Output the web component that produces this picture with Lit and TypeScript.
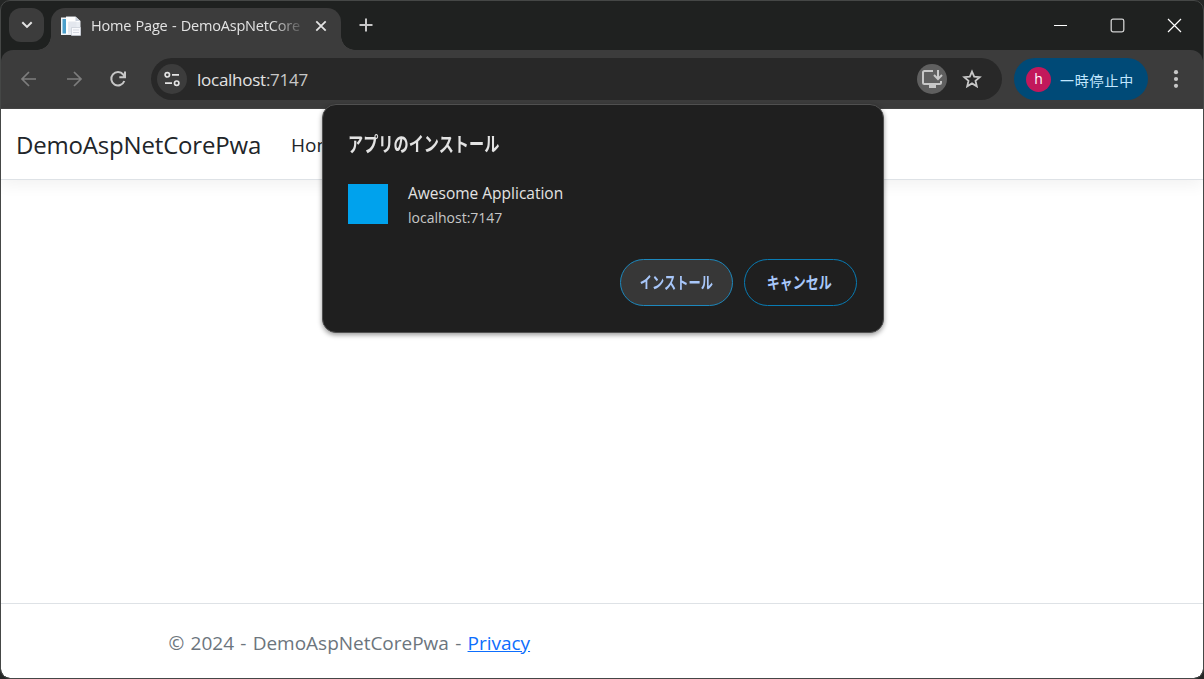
import { LitElement, html, css } from "lit";
import { customElement } from "lit/decorators.js";

@customElement("app-root")
export class AppRoot extends LitElement {
  static styles = css`
    :host { display: block; width: 1204px; height: 679px; background: #242625; overflow: hidden;
      font-family: "Open Sans", "Noto Sans CJK JP", sans-serif; }
    * { box-sizing: border-box; }
    svg { display: block; flex: none; }
    .window { position: relative; width: 1204px; height: 679px; border: 1px solid #454746; border-radius: 10px;
      overflow: hidden; display: flex; flex-direction: column; background: #1f2120; }
    .tabs { height: 49px; flex: none; display: flex; padding: 7px 0 0 8px; }
    .search { width: 35px; height: 34px; border-radius: 12px; background: #3c3c3c; display: grid; place-items: center; }
    .tab { position: relative; width: 290px; height: 42px; margin-left: 7px; background: #3c3c3c;
      border-radius: 14px 14px 0 0; display: flex; align-items: center; padding: 0 13px 6px 10px; }
    .tab::before, .tab::after { content: ""; position: absolute; bottom: 0; width: 14px; height: 14px; }
    .tab::before { left: -14px; background: radial-gradient(circle at 0 0, transparent 13.5px, #3c3c3c 14px); }
    .tab::after { right: -14px; background: radial-gradient(circle at 100% 0, transparent 13.5px, #3c3c3c 14px); }
    .tab-title { width: 210px; margin-left: 10px; white-space: nowrap; overflow: hidden; color: #e3e3e3;
      font-size: 14.5px; line-height: 22px; letter-spacing: -0.2px; word-spacing: 0.8px;
      -webkit-mask-image: linear-gradient(90deg, #000 180px, transparent 216px); }
    .tab-close { margin-left: 14px; }
    .plus { margin: 10px 0 0 18px; }
    .controls { margin-left: auto; display: flex; padding: 10px 21px 0 0; gap: 42px; }
    .toolbar { height: 59px; flex: none; background: #3c3c3c; border-radius: 12px 12px 0 0; display: flex;
      align-items: center; padding-left: 18px; border-bottom: 1px solid #454545; }
    .nav { display: flex; gap: 24.5px; }
    .omni { width: 851px; height: 42px; margin-left: 23px; border-radius: 21px; background: #282828;
      display: flex; align-items: center; padding: 0 20px 0 6px; }
    .round { width: 30px; height: 30px; border-radius: 50%; display: grid; place-items: center; background: #3c3c3c; }
    .round.pwa { background: #5f5f5f; margin-left: auto; }
    .url { margin-left: 10px; color: #e3e3e3; font-size: 17px; line-height: 24px; letter-spacing: -0.26px; padding-top: 1px; }
    .url span { color: #c7c7c7; }
    .star { margin-left: 15px; }
    .chip { width: 134px; height: 42px; border-radius: 21px; margin-left: 12px; background: #004a77; color: #c2e7ff;
      display: flex; align-items: center; padding-left: 12px; font: 14px/20px "Noto Sans CJK JP", sans-serif; }
    .chip-text { margin: 1px 0 0 9px; letter-spacing: 0.8px; white-space: nowrap; }
    .avatar { width: 25px; height: 25px; border-radius: 50%; background: #c2185b; color: #fff; text-align: center;
      font: 14px/24px "Open Sans", sans-serif; }
    .more { margin-left: 23px; }
    .page { flex: 1; background: #fff; display: flex; flex-direction: column; border-radius: 0 0 9px 9px; }
    .header { height: 71px; border-bottom: 1px solid #dee2e6; box-shadow: 0 5px 15px rgba(0,0,0,.055);
      display: flex; align-items: center; padding: 0 15px 0 15px; color: #212529; }
    .brand { font-size: 24px; line-height: 36px; width: 275px; letter-spacing: -0.18px; margin-top: 2px; white-space: nowrap; }
    .link { font-size: 19px; letter-spacing: 0; margin-top: 1px; }
    .footer { margin-top: auto; height: 75px; border-top: 1px solid #dee2e6; padding: 25px 0 0 167.5px; color: #6c757d;
      font-size: 19px; line-height: 28px; letter-spacing: -0.02px; word-spacing: 1.4px; white-space: nowrap; }
    .footer a { color: #0d6efd; text-decoration: underline; }
    .dialog { position: absolute; left: 321px; top: 103px; width: 562px; height: 229px; border-radius: 14px;
      background: #1f1f1f; border: 1.5px solid #505050; box-shadow: 0 2px 5px rgba(0,0,0,.4);
      padding: 25px 26px 26px 25px; display: flex; flex-direction: column; }
    .title { color: #e3e3e3; font: 700 20px/28px "Noto Sans CJK JP", sans-serif; height: 28px; }
    .narrow { display: inline-block; transform-origin: 0 50%; white-space: nowrap; }
    .title .narrow { transform: scaleX(.758); }
    .app { display: flex; margin-top: 26px; gap: 20px; }
    .app-icon { width: 40px; height: 40px; background: #00a2ed; }
    .name { color: #e3e3e3; font-size: 15.5px; line-height: 24px; margin-top: -3px; letter-spacing: 0; white-space: nowrap; }
    .host { color: #c7c7c7; font-size: 14px; line-height: 20px; margin-top: 3px; letter-spacing: 0; }
    .actions { margin-top: auto; display: flex; justify-content: flex-end; gap: 11px; }
    .btn { width: 113px; height: 47px; border-radius: 24px; border: 1.3px solid #087bb3; background: transparent; padding: 0 0 1px;
      color: #a8c7fa; font: 700 16.5px/24px "Noto Sans CJK JP", sans-serif; display: grid; place-items: center; }
    .btn.primary { background: #373737; border-color: #1d88bd; }
    .btn .narrow { transform-origin: 50% 50%; transform: translateX(-1px) scaleX(.79); }
    .btn.primary .narrow { transform: scaleX(.74); }
  `;

  render() {
    return html`
      <div class="window">
        <div class="tabs">
          <div class="search">
            <svg width="12" height="8" viewBox="0 0 12 8" fill="none" stroke="#e3e3e3" stroke-width="2"><path d="M1.3 1.2 6 5.9l4.7-4.7"/></svg>
          </div>
          <div class="tab">
            <svg width="20" height="20" viewBox="0 0 20 20">
              <path d="M0 1.5h5V19H0z" fill="#f3f6f9"/><path d="M1.5 3H5v14.500H1.500z" fill="#4b9fcb"/>
              <path d="M5 .5h9.500l5 4.500V19H5z" fill="#e9edf3"/>
              <path d="M5 1h9.500l4 4v1H7v12H5z" fill="#fff"/><path d="M14.500.800V5h4z" fill="#c7cfdb"/>
              <path d="M7.500 5.500h8v6h-8z" fill="#e3e7ee"/><path d="M7 13h3M7 15h3" stroke="#dde2ea"/>
              <path d="M10.500 11.500h9V19.500h-9z" fill="#f8f9fc" stroke="#c6cbd6" stroke-width=".7"/><path d="M12 14h6M12 16.500h6" stroke="#d5d9e2"/>
            </svg>
            <span class="tab-title">Home Page - DemoAspNetCorePwa</span>
            <svg class="tab-close" width="12" height="12" viewBox="0 0 12 12" stroke="#e3e3e3" stroke-width="1.8"><path d="m1.300 1.300 9.400 9.400M10.700 1.300l-9.400 9.400"/></svg>
          </div>
          <svg class="plus" width="14" height="14" viewBox="0 0 14 14" stroke="#c7c7c7" stroke-width="2"><path d="M7 .5v13M.5 7h13"/></svg>
          <div class="controls">
            <svg width="15" height="15" viewBox="0 0 15 15" stroke="#fff"><path d="M1 7.500h13"/></svg>
            <svg width="15" height="15" viewBox="0 0 15 15" fill="none" stroke="#d0d0d0" stroke-width="1.3"><rect x="1.2" y="1.2" width="12.6" height="12.6" rx="1.8"/></svg>
            <svg width="15" height="15" viewBox="0 0 15 15" stroke="#fff" stroke-width="1.2"><path d="m1 1 13 13M14 1 1 14"/></svg>
          </div>
        </div>
        <div class="toolbar">
          <div class="nav">
            <svg width="20" height="20" viewBox="0 0 20 20" fill="none" stroke="#7d7d7d" stroke-width="1.7"><path d="M17 10H3.400M10 3 3 10l7 7"/></svg>
            <svg width="20" height="20" viewBox="0 0 20 20" fill="none" stroke="#7d7d7d" stroke-width="1.7"><path d="M3 10h13.600M10 3l7 7-7 7"/></svg>
            <svg width="20" height="20" viewBox="0 0 20 20" fill="none" stroke="#c7c7c7" stroke-width="2"><path d="M16.300 12a6.700 6.700 0 1 1-1.100-6.500l1.300 1.800M17 2.500v5.700h-5.700"/></svg>
          </div>
          <div class="omni">
            <div class="round">
              <svg width="18" height="18" viewBox="0 0 18 18" fill="none" stroke="#e3e3e3" stroke-width="1.7"><circle cx="4.3" cy="4.8" r="2.2"/><path d="M9 4.800h7M2 13.200h7"/><circle cx="13.7" cy="13.2" r="2.2"/></svg>
            </div>
            <div class="url">localhost<span>:7147</span></div>
            <div class="round pwa">
              <svg width="22" height="20" viewBox="0 0 22 20" fill="none" stroke="#c7c7c7" stroke-width="2"><path d="M12 2H3.500Q2 2 2 3.500v10Q2 15 3.500 15h15q1.500 0 1.500-1.500V12"/><path d="M17 1v8.500M13 6l4 4 4-4"/><path d="M8 15h7v4H8z" fill="#c7c7c7" stroke="none"/></svg>
            </div>
            <svg class="star" width="20" height="20" viewBox="0 0 20 20" fill="none" stroke="#c7c7c7" stroke-width="1.8"><path d="m10 2.600 2.200 5.100 5.500.500-4.200 3.600 1.300 5.500-4.800-2.900-4.800 2.900 1.300-5.500-4.200-3.600 5.500-.500z"/></svg>
          </div>
          <div class="chip"><span class="avatar">h</span><span class="chip-text">一時停止中</span></div>
          <svg class="more" width="10" height="20" viewBox="0 0 10 20" fill="#c7c7c7"><circle cx="5" cy="3.2" r="2.1"/><circle cx="5" cy="10" r="2.1"/><circle cx="5" cy="16.8" r="2.1"/></svg>
        </div>
        <div class="page">
          <div class="header"><span class="brand">DemoAspNetCorePwa</span><span class="link">Home</span></div>
          <div class="footer">© 2024 - DemoAspNetCorePwa - <a>Privacy</a></div>
        </div>
        <div class="dialog">
          <div class="title"><span class="narrow">アプリのインストール</span></div>
          <div class="app">
            <div class="app-icon"></div>
            <div><div class="name">Awesome Application</div><div class="host">localhost:7147</div></div>
          </div>
          <div class="actions">
            <button class="btn primary"><span class="narrow">インストール</span></button>
            <button class="btn"><span class="narrow">キャンセル</span></button>
          </div>
        </div>
      </div>`;
  }
}
